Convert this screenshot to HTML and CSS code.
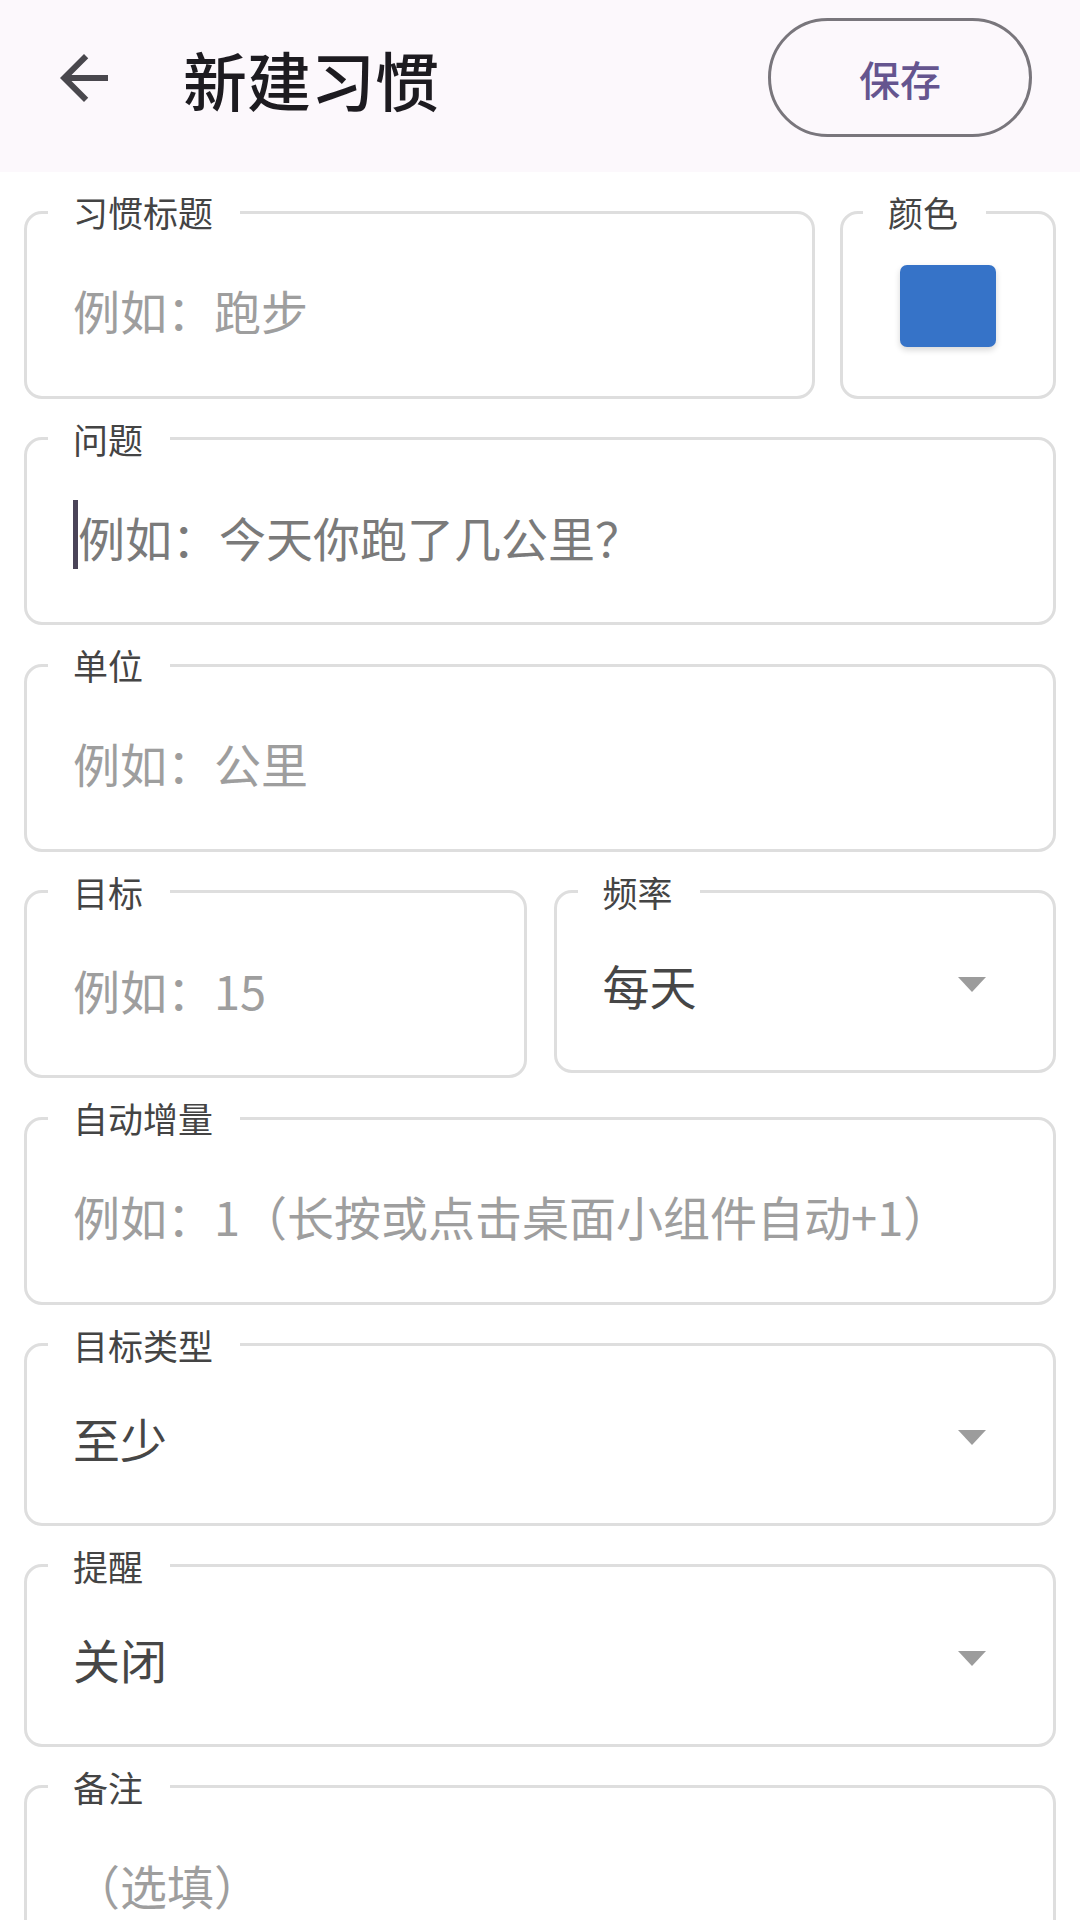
FILE: index.html
```html
<!DOCTYPE html>
<html lang="zh-CN">
<head>
<meta charset="utf-8">
<title>新建习惯</title>
<link rel="stylesheet" href="styles.css">
</head>
<body>
<header class="app-bar">
  <button class="back-btn" aria-label="返回">
    <svg viewBox="0 0 24 24" width="72" height="72"><path d="M20 11H7.83l5.59-5.59L12 4l-8 8 8 8 1.41-1.41L7.83 13H20v-2z"/></svg>
  </button>
  <h1 class="app-title">新建习惯</h1>
  <button class="save-btn">保存</button>
</header>

<main class="form">
  <div class="row row-title">
    <fieldset class="field">
      <legend>习惯标题</legend>
      <div class="control text"><span class="hint">例如：跑步</span></div>
    </fieldset>
    <fieldset class="field field-color">
      <legend>颜色</legend>
      <div class="swatch" style="background:#3673c8"></div>
    </fieldset>
  </div>

  <fieldset class="field">
    <legend>问题</legend>
    <div class="control text"><span class="caret"></span><span class="hint focused">例如：今天你跑了几公里？</span></div>
  </fieldset>

  <fieldset class="field">
    <legend>单位</legend>
    <div class="control text"><span class="hint">例如：公里</span></div>
  </fieldset>

  <div class="row row-half">
    <fieldset class="field">
      <legend>目标</legend>
      <div class="control text"><span class="hint">例如：15</span></div>
    </fieldset>
    <fieldset class="field">
      <legend>频率</legend>
      <div class="control select"><span class="value">每天</span><svg class="drop" viewBox="0 0 28 15" width="28" height="15"><polygon points="0,0 28,0 14,15"/></svg></div>
    </fieldset>
  </div>

  <fieldset class="field">
    <legend>自动增量</legend>
    <div class="control text"><span class="hint">例如：1（长按或点击桌面小组件自动+1）</span></div>
  </fieldset>

  <fieldset class="field">
    <legend>目标类型</legend>
    <div class="control select"><span class="value">至少</span><svg class="drop" viewBox="0 0 28 15" width="28" height="15"><polygon points="0,0 28,0 14,15"/></svg></div>
  </fieldset>

  <fieldset class="field">
    <legend>提醒</legend>
    <div class="control select"><span class="value">关闭</span><svg class="drop" viewBox="0 0 28 15" width="28" height="15"><polygon points="0,0 28,0 14,15"/></svg></div>
  </fieldset>

  <fieldset class="field">
    <legend>备注</legend>
    <div class="control text"><span class="hint">（选填）</span></div>
  </fieldset>
</main>
</body>
</html>
```

FILE: styles.css
```css
* {
  box-sizing: border-box;
}

html, body {
  margin: 0;
  padding: 0;
}

body {
  width: 1080px;
  height: 1920px;
  overflow: hidden;
  background: #ffffff;
  font-family: "Noto Sans CJK SC", "Noto Sans", sans-serif;
  color: #444444;
}

/* top app bar */
.app-bar {
  display: flex;
  align-items: center;
  height: 172px;
  padding: 18px 48px 35px 48px;
  background: #fcf8fc;
}

.back-btn {
  display: flex;
  width: 72px;
  height: 72px;
  padding: 0;
  border: 0;
  background: none;
}

.back-btn svg {
  fill: #49474d;
}

.app-title {
  margin: 0 0 0 63px;
  font-size: 64px;
  line-height: 1;
  font-weight: 500;
  color: #1d1b20;
}

.save-btn {
  margin-left: auto;
  width: 264px;
  height: 119px;
  border: 3px solid #79767c;
  border-radius: 60px;
  background: transparent;
  font-family: inherit;
  font-size: 41px;
  font-weight: 500;
  color: #65558f;
}

/* form body */
.form {
  display: flex;
  flex-direction: column;
  gap: 20px;
  padding: 20px 24px 0 24px;
}

.row {
  display: grid;
  align-items: start;
}

.row-title {
  grid-template-columns: 1fr 216px;
  column-gap: 25px;
  align-items: stretch;
}

.row-half {
  grid-template-columns: 1fr 1fr;
  column-gap: 27px;
}

.field {
  margin: 0;
  min-width: 0;
  padding: 0 0 0 21px;
  border: 3px solid #dedede;
  border-radius: 18px;
}

.field legend {
  padding: 0 27px 0 25px;
  font-size: 35px;
  line-height: 40px;
  color: #444444;
}

.control {
  display: flex;
  align-items: center;
  padding-left: 25px;
  padding-right: 67px;
  font-size: 47px;
  line-height: 56px;
  white-space: nowrap;
}

.control.text {
  padding-top: 50px;
  padding-bottom: 57.5px;
}

.control.select {
  justify-content: space-between;
  padding-top: 45px;
  padding-bottom: 57px;
}

.hint {
  color: #9e9e9e;
}

.hint.focused {
  color: #7a7a7a;
}

.value {
  color: #464646;
}

/* text cursor in the focused field */
.caret {
  flex: none;
  width: 5px;
  height: 69px;
  margin: -9px 0 -4px 0;
  background: #4a4458;
}

.drop {
  flex: none;
  fill: #9c9c9c;
}

/* colour picker */
.field-color {
  padding: 0;
}

.field-color legend {
  margin-left: 20px;
  padding: 0 28px 0 25px;
}

.swatch {
  width: 96px;
  height: 82px;
  margin: 33px auto 0 auto;
  border-radius: 7px;
  box-shadow: 0 3px 6px rgba(0, 0, 0, 0.16);
}
```
